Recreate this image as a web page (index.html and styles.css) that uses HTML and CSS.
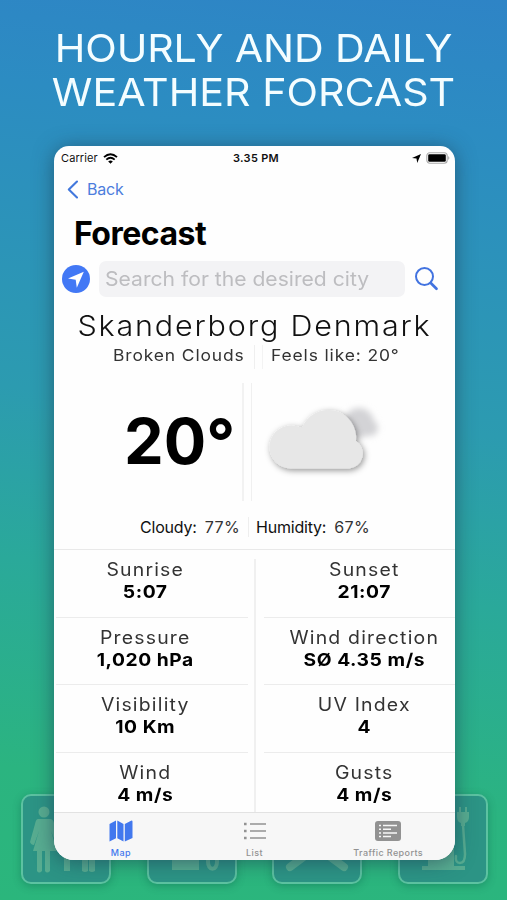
FILE: index.html
```html
<!DOCTYPE html>
<html lang="en">
<head>
  <meta charset="UTF-8">
  <meta name="viewport" content="width=device-width, initial-scale=1.0">
  <title>Weather Forecast</title>
  <link rel="stylesheet" href="styles.css">
</head>
<body>
  <!-- facility signs behind the phone -->
  <div class="signs">
    <div class="sign">
      <svg viewBox="0 0 90 90">
        <circle cx="23" cy="18" r="5.5"/>
        <path d="M17 25h12q3 0 4 4l5 18q1 4-2 5l-6-15 6 20h-7v20q-3 3-5 0V57h-3v20q-3 3-5 0V57H12l6-20-5 14q-3 0-4-3l5-18q1-5 3-5z"/>
        <path d="M43 61h6v16h-6zM61 58h6v19q-3 2-6 0zM68 58h6v19q-3 2-6 0z"/>
      </svg>
    </div>
    <div class="sign">
      <svg viewBox="0 0 90 90">
        <path d="M25 45h27v31H25z"/>
        <path class="line" d="M61 58v10a4 6 0 0 0 9 0V58"/>
      </svg>
    </div>
    <div class="sign">
      <svg viewBox="0 0 90 90">
        <path class="thick" d="M18 73l27-20 27 20"/>
      </svg>
    </div>
    <div class="sign">
      <svg viewBox="0 0 90 90">
        <path d="M30 35h26v37H30zM24 72h43v4H24zM61 13h2v5h4v-5h2v5h2v5q0 5-4 6v3h-4v-3q-4-1-4-6v-5h2z"/>
        <path class="cord" d="M65 31l2 29q0 9-5 9t-4-7"/>
      </svg>
    </div>
  </div>

  <h1 class="headline"><span class="line-one">HOURLY AND DAILY</span><span class="line-two">WEATHER FORCAST</span></h1>

  <div class="phone">
    <div class="status-bar">
      <div class="carrier">Carrier
        <svg width="15" height="11" viewBox="0 0 15 11" fill="none" stroke="#000" stroke-width="1.9">
          <path d="M1 4.1q6.5-5.8 13 0M3.3 6.6q4.2-3.7 8.4 0"/>
          <path d="M5.2 8.4q2.3-1.8 4.6 0L7.5 10.8z" fill="#000" stroke="none"/>
        </svg>
      </div>
      <div class="time">3.35 PM</div>
      <div class="status-icons">
        <svg width="9" height="9" viewBox="0 0 9 9"><path d="M9 0L5.2 9 4.5 4.6 0 3.9z"/></svg>
        <svg width="25" height="12" viewBox="0 0 25 12">
          <rect x=".8" y=".8" width="20.4" height="10.4" rx="3" fill="#fff" stroke="#aaa" stroke-width="1.1"/>
          <rect x="2.2" y="2.2" width="17.6" height="7.6" rx="1.3"/>
          <path d="M22.3 4q2 2 0 4z" fill="#999"/>
        </svg>
      </div>
    </div>

    <div class="nav-bar">
      <svg width="12" height="19" viewBox="0 0 12 19" fill="none" stroke="#4278dd" stroke-width="2.1" stroke-linecap="round" stroke-linejoin="round"><path d="M10 1.5L1.8 9.5 10 17.5"/></svg>
      <span>Back</span>
    </div>

    <h2 class="page-title">Forecast</h2>

    <div class="search-row">
      <svg class="locate" width="28" height="28" viewBox="0 0 28 28">
        <circle cx="14" cy="14" r="14" fill="#4278f5"/>
        <path d="M21.8 6.7L14.8 22.8 13.7 14.8 6 13.6z" fill="#fff"/>
      </svg>
      <div class="search-box"><span>Search for the desired city</span></div>
      <svg width="24" height="24" viewBox="0 0 24 24" fill="none" stroke="#4273e0" stroke-width="2" stroke-linecap="round"><circle cx="9.5" cy="9.5" r="8.5"/><path d="M16 16.200l5.500 5.500" stroke-width="2.700"/></svg>
    </div>

    <div class="city">Skanderborg Denmark</div>
    <div class="summary">
      <div class="condition"><span>Broken Clouds</span></div>
      <div class="feels"><span>Feels like: 20°</span></div>
    </div>

    <div class="current">
      <div class="temp">20°</div>
      <div class="cloud">
        <svg width="130" height="90" viewBox="0 0 130 90">
          <defs>
            <filter id="soft" x="-50%" y="-50%" width="200%" height="200%"><feGaussianBlur stdDeviation="3"/></filter>
            <filter id="shade" x="-20%" y="-20%" width="150%" height="150%"><feDropShadow dx="1.5" dy="2" stdDeviation="3" flood-color="#000" flood-opacity=".42"/></filter>
          </defs>
          <g fill="#d3d3d6" filter="url(#soft)">
            <circle cx="99" cy="32" r="15"/>
            <circle cx="110" cy="37" r="8"/>
          </g>
          <path d="M31 77.5a21.500 21.500 0 0 1 0-43q6 0 11 2.500a28 28 0 0 1 54 13A15 15 0 0 1 89 77.500z" fill="#e7e7e7" filter="url(#shade)"/>
        </svg>
      </div>
    </div>

    <div class="ratios">
      <div class="cloudy"><span class="name">Cloudy:</span><span class="percent">77%</span></div>
      <div class="humidity"><span class="name">Humidity:</span><span class="percent">67%</span></div>
    </div>

    <div class="details">
      <div class="column">
        <div class="item"><div class="label">Sunrise</div><div class="value">5:07</div></div>
        <div class="item"><div class="label">Pressure</div><div class="value">1,020 hPa</div></div>
        <div class="item"><div class="label">Visibility</div><div class="value">10 Km</div></div>
        <div class="item"><div class="label">Wind</div><div class="value">4 m/s</div></div>
      </div>
      <div class="column">
        <div class="item"><div class="label">Sunset</div><div class="value">21:07</div></div>
        <div class="item"><div class="label">Wind direction</div><div class="value">SØ 4.35 m/s</div></div>
        <div class="item"><div class="label">UV Index</div><div class="value">4</div></div>
        <div class="item"><div class="label">Gusts</div><div class="value">4 m/s</div></div>
      </div>
    </div>

    <div class="tab-bar">
      <div class="tab active">
        <svg width="24" height="22" viewBox="0 0 24 22" fill="currentColor">
          <path d="M.5 4L7 .5v17.700L.5 21.500zM8.300.5l6.200 3.500v17.500l-6.200-3.300zM15.800 4L22.500.5q1 0 1 1v16.500l-7.700 3.500z"/>
        </svg>
        <span>Map</span>
      </div>
      <div class="tab">
        <svg width="24" height="22" viewBox="0 0 24 22" stroke="currentColor" stroke-width="1.6"><path d="M1 4h2.600M1 11h2.600M1 18h2.600" stroke-width="2.300"/><path d="M7 4h16M7 11h16M7 18h16"/></svg>
        <span>List</span>
      </div>
      <div class="tab">
        <svg width="26" height="22" viewBox="0 0 26 22"><rect y="1" width="26" height="20" rx="3" fill="currentColor"/><path d="M4 5.500h2M4 9.200h2M4 12.900h2M4 16.600h2M8 5.500h14M8 9.200h8M8 12.900h14M8 16.600h8" stroke="#f7f7f7" stroke-width="1.500"/></svg>
        <span>Traffic Reports</span>
      </div>
    </div>
  </div>
</body>
</html>
```

FILE: styles.css
```css
* {
  box-sizing: border-box;
}
body {
  margin: 0;
  height: 900px;
  overflow: hidden;
  position: relative;
  font-family: Inter, "Liberation Sans", sans-serif;
  background: linear-gradient(186deg, #2e84c6 0%, #2c8cc2 14%, #2c9bb0 46%, #2aa99a 64%, #2bb480 86%, #2bb67c 100%);
  color: #111;
}
svg {
  display: block;
  flex: none;
}
.headline {
  margin: 0;
  padding-top: 27px;
  text-align: center;
  color: #f4fdff;
  font-size: 38.5px;
  line-height: 43.5px;
  font-weight: 400;
  white-space: nowrap;
}
.headline span {
  display: block;
  transform: scaleX(1.07);
}
.line-one {
  letter-spacing: -0.1px;
}
.line-two {
  letter-spacing: 0;
}

/* signs */
.signs {
  position: absolute;
  top: 794px;
  left: 21px;
  display: flex;
  gap: 35.5px;
}
.sign {
  width: 90px;
  height: 90px;
  border: 2px solid #5cc2a1;
  border-radius: 10px;
  background: #2c9485;
  box-shadow: 0 2px 8px rgba(0, 70, 60, 0.3);
}
.sign svg {
  margin: -2px;
  width: 90px;
  height: 90px;
  fill: #58ad91;
}
.sign .line, .sign .thick, .sign .cord {
  fill: none;
  stroke: #58ad91;
  stroke-width: 4;
  stroke-linecap: round;
}
.sign .thick {
  stroke-width: 8;
}
.sign .cord {
  stroke-width: 2.5;
}

/* phone */
.phone {
  position: relative;
  width: 401px;
  height: 714px;
  margin: 32px 0 0 54px;
  display: flex;
  flex-direction: column;
  background: #fefefe;
  border-radius: 15px 15px 20px 20px;
  overflow: hidden;
  box-shadow: 0 2px 20px rgba(30, 60, 80, 0.6);
}
.status-bar {
  display: grid;
  grid-template-columns: 1fr auto 1fr;
  align-items: center;
  height: 24px;
  margin-bottom: 1px;
  padding: 0 4px 0 7px;
  font-size: 11px;
}
.carrier, .status-icons {
  display: flex;
  align-items: center;
  gap: 5px;
}
.carrier {
  letter-spacing: 0.1px;
}
.status-icons {
  justify-content: flex-end;
}
.time {
  font-weight: 600;
  letter-spacing: 0.3px;
}
.nav-bar {
  display: flex;
  align-items: center;
  gap: 8px;
  height: 36px;
  padding-left: 13px;
  color: #4c7ddd;
  font-size: 16px;
  letter-spacing: -0.2px;
}
.page-title {
  margin: 0;
  padding: 6px 0 0 20px;
  height: 54px;
  font-size: 32px;
  line-height: 42px;
  font-weight: 700;
  letter-spacing: -0.5px;
  color: #000;
}
.search-row {
  display: flex;
  align-items: center;
  height: 36px;
  padding: 0 16px 0 8px;
}
.search-box {
  width: 306px;
  height: 36px;
  margin: 0 10px 0 9px;
  padding-left: 6px;
  border-radius: 7px;
  background: #f3f3f5;
  color: #bdbdc0;
  font-size: 20px;
  line-height: 36px;
  white-space: nowrap;
}
.search-box span {
  display: inline-block;
  transform: scaleX(1.056);
  transform-origin: left;
}
.city {
  height: 48px;
  padding-top: 10px;
  text-align: center;
  font-size: 28.5px;
  line-height: 38px;
  font-weight: 300;
  letter-spacing: 1.7px;
  white-space: nowrap;
  transform: scaleX(1.07);
}
.summary {
  display: flex;
  height: 24px;
  padding-left: 59px;
  font-size: 16px;
  line-height: 20px;
  letter-spacing: 0.8px;
  color: #333;
  white-space: nowrap;
}
.summary span {
  display: inline-block;
  transform: scaleX(1.09);
  transform-origin: left;
}
.condition {
  width: 142px;
  border-right: 1px solid #efefef;
}
.feels {
  margin-left: 7px;
  padding-left: 8px;
  border-left: 1px solid #f3f3f3;
}
.current {
  display: flex;
  height: 118px;
  margin-top: 14px;
}
.temp {
  width: 190px;
  padding-left: 70px;
  border-right: 2px solid #f2f2f2;
  color: #000;
  font-size: 63px;
  line-height: 116px;
  font-weight: 700;
}
.cloud {
  margin-left: 7px;
  padding: 8px 0 0 8px;
  border-left: 1px solid #f0f0f0;
}
.ratios {
  display: flex;
  height: 20px;
  margin: 16px 0 12px;
  padding-left: 86px;
  font-size: 16px;
  line-height: 20px;
}
.ratios > div {
  display: flex;
  gap: 8px;
}
.cloudy {
  width: 109px;
  border-right: 1px solid #eee;
}
.humidity {
  padding-left: 7px;
}
.name {
  letter-spacing: -0.2px;
}
.percent {
  color: #333;
  letter-spacing: 0.4px;
}

.details {
  display: flex;
  gap: 16px;
  height: 263px;
  padding-left: 2px;
  border-top: 1px solid #e9e9e9;
  position: relative;
}
.details::before {
  content: "";
  position: absolute;
  left: 200px;
  top: 9px;
  bottom: 0;
  width: 2px;
  background: #f0f0f0;
}
.column {
  width: 192px;
}
.column:first-child .item {
  padding-right: 13px;
}
.column:last-child .item {
  padding-left: 9px;
}
.item {
  height: 67.5px;
  padding-top: 8px;
  text-align: center;
  border-bottom: 1px solid #ececec;
}
.label {
  color: #333;
  font-size: 18px;
  line-height: 23px;
  letter-spacing: 1.1px;
  white-space: nowrap;
  transform: scaleX(1.08);
}
.value {
  color: #000;
  font-size: 17.5px;
  line-height: 22px;
  font-weight: 700;
  letter-spacing: 0.5px;
  transform: scaleX(1.1);
}

.tab-bar {
  position: relative;
  display: flex;
  height: 48px;
  border-top: 1px solid #e2e2e2;
  background: #f7f7f7;
}
.tab {
  flex: 1;
  display: flex;
  flex-direction: column;
  align-items: center;
  gap: 5px;
  padding-top: 7px;
  color: #929292;
  font-size: 9px;
  line-height: 12px;
  font-weight: 500;
  letter-spacing: 0.4px;
}
.tab.active {
  color: #4278ee;
}
```
